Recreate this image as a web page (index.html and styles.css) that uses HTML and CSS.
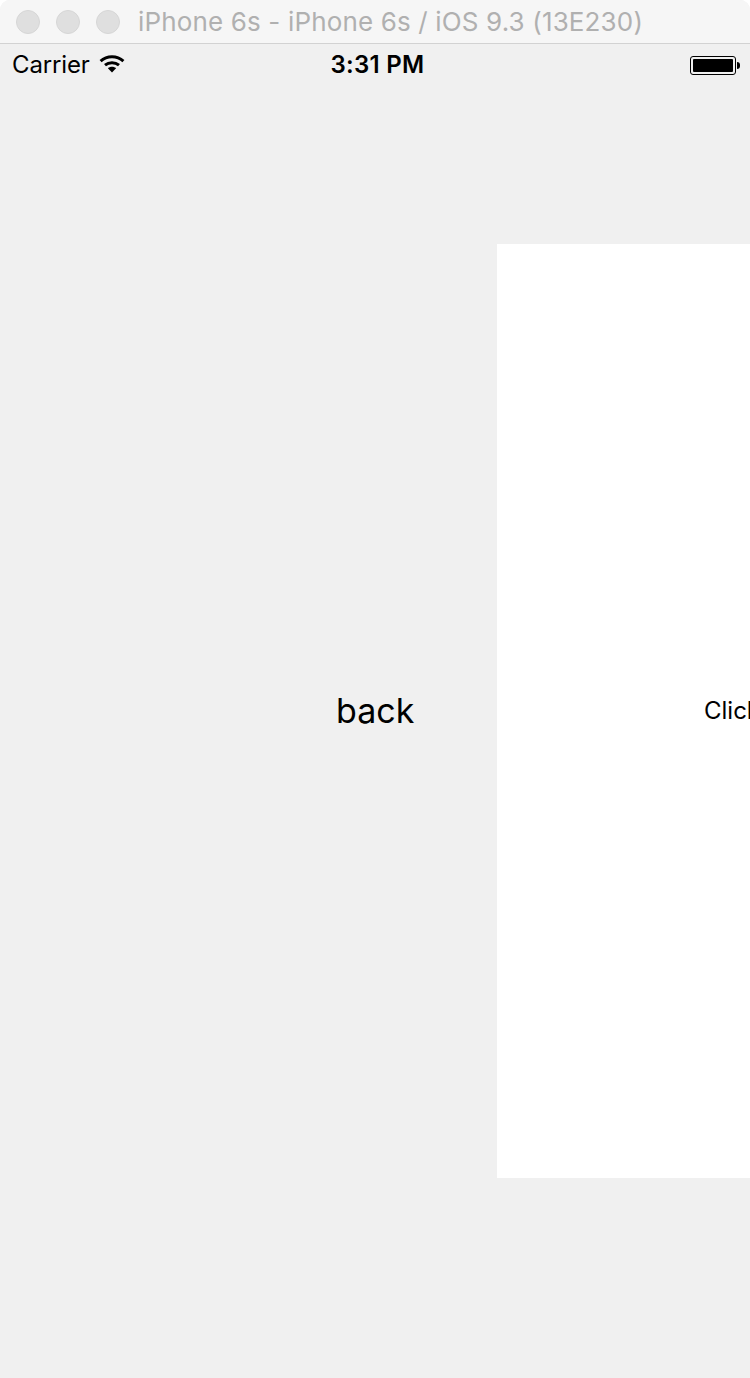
FILE: index.html
```html
<!DOCTYPE html>
<html lang="en">
<head>
<meta charset="utf-8">
<title>iPhone 6s - iPhone 6s / iOS 9.3 (13E230)</title>
<link rel="stylesheet" href="styles.css">
</head>
<body>
<div class="window">
  <header class="titlebar">
    <div class="lights">
      <span class="light"></span>
      <span class="light"></span>
      <span class="light"></span>
    </div>
    <div class="title">iPhone 6s - iPhone 6s / iOS 9.3 (13E230)</div>
  </header>
  <div class="screen">
    <div class="statusbar">
      <div class="status-left">
        <span class="carrier">Carrier</span>
        <svg class="wifi" width="26" height="20" viewBox="0 0 26 20" aria-hidden="true">
          <path d="M1.6 7.2C8 1.4 18 1.4 24.4 7.2" fill="none" stroke="#000" stroke-width="3"/>
          <path d="M6 11.2C10 7.8 16 7.8 20 11.2" fill="none" stroke="#000" stroke-width="3"/>
          <path d="M8.9 14.2C11.2 12.2 14.8 12.2 17.1 14.2L13 18.6Z" fill="#000"/>
        </svg>
      </div>
      <div class="clock">3:31 PM</div>
      <div class="status-right">
        <div class="battery"><div class="battery-fill"></div></div>
        <div class="battery-tip"></div>
      </div>
    </div>
    <main class="stage">
      <div class="back-side"><span class="back">back</span></div>
      <section class="panel"><span class="click">Click</span></section>
    </main>
  </div>
</div>
</body>
</html>
```
FILE: styles.css
```css
* { box-sizing: border-box; }
html, body { margin: 0; padding: 0; background: #fff; }
body { width: 750px; height: 1378px; overflow: hidden; font-family: "Inter", "Liberation Sans", sans-serif; color: #000; }
.window { width: 750px; height: 1378px; display: flex; flex-direction: column; background: #f0f0f0; border-radius: 10px 10px 0 0; overflow: hidden; }
.titlebar { height: 44px; flex: none; display: flex; align-items: center; padding: 0 0 0 16px; background: #f6f6f6; border-bottom: 1px solid #d2d2d2; }
.lights { display: flex; gap: 16px; }
.light { width: 24px; height: 24px; border-radius: 50%; background: #dfdfdf; border: 1px solid #d6d6d6; }
.title { margin-left: 18px; font-size: 26px; letter-spacing: 0.15px; line-height: 44px; color: #b0b0b0; white-space: nowrap; }
.screen { flex: 1; display: flex; flex-direction: column; min-height: 0; }
.statusbar { height: 40px; flex: none; display: grid; grid-template-columns: 1fr auto 1fr; align-items: center; padding: 0 10px 0 12px; }
.status-left { display: flex; align-items: center; gap: 9px; }
.carrier { font-size: 24px; letter-spacing: -0.15px; line-height: 42px; }
.wifi { display: block; margin-top: -3px; }
.clock { margin-left: 3px; font-size: 24px; font-weight: 600; letter-spacing: 0.3px; line-height: 42px; }
.status-right { display: flex; align-items: center; justify-content: flex-end; }
.battery { width: 46px; height: 19px; padding: 2px; border: 1px solid #000; border-radius: 3px; }
.battery-fill { width: 100%; height: 100%; background: #000; border-radius: 1px; }
.battery-tip { width: 3px; height: 7px; background: #000; border-radius: 0 3px 3px 0; margin-left: 1px; }
.stage { flex: 1; display: flex; min-height: 0; padding: 160px 0 200px; overflow: hidden; }
.back-side { width: 497px; flex: none; display: flex; align-items: center; padding-left: 336px; }
.back { font-size: 34px; line-height: 44px; }
.panel { flex: 1; min-width: 0; background: #fff; display: flex; align-items: center; padding-left: 207px; overflow: hidden; }
.click { font-size: 24px; line-height: 30px; white-space: nowrap; }
```
